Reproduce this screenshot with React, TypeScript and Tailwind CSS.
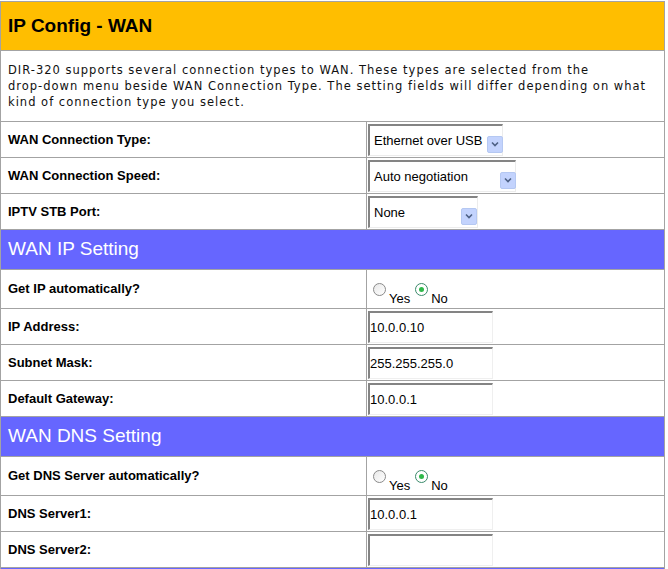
import React from 'react';

const line = 'border border-[#a3a3a3]';

function FakeSelect({ value, width, arrowLeft }: { value: string; width: number; arrowLeft: number }) {
  return (
    <div
      className="relative h-[32px] border-t-2 border-l-2 border-t-[#848484] border-l-[#848484] border-b border-r border-b-[#ececec] border-r-[#ececec] bg-white"
      style={{ width }}
    >
      <span className="absolute left-[4px] top-[8px] text-[13px] leading-[14px] text-black">{value}</span>
      <span
        className="absolute top-[10px] flex h-[17px] w-[16px] items-center justify-center rounded-[2px] border border-[#b5c8f2] bg-[#c3d3fd]"
        style={{ left: arrowLeft }}
      >
        <svg width="8" height="6" viewBox="0 0 8 6">
          <path d="M1 1.5 L4 4.5 L7 1.5" fill="none" stroke="#4d6185" strokeWidth="1.6" />
        </svg>
      </span>
    </div>
  );
}

function FakeInput({ value }: { value: string }) {
  return (
    <div className="h-[32px] w-[125px] border-t-2 border-l-2 border-t-[#848484] border-l-[#848484] border-b border-r border-b-[#efefef] border-r-[#efefef] bg-white pt-[7px] text-[13px] leading-[15px] text-black">
      {value}
    </div>
  );
}

function YesNo() {
  return (
    <div className="flex items-start pl-[5px] pt-[10px] text-[13px] text-black">
      <span className="mt-[1px] h-[13px] w-[13px] rounded-full border border-[#8a8a8a] bg-gradient-to-br from-[#e8e8e8] to-white" />
      <span className="mt-[10px] ml-[3px] mr-[5px] leading-[14px]">Yes</span>
      <span className="mt-[1px] flex h-[13px] w-[13px] items-center justify-center rounded-full border border-[#3a8a6a] bg-white">
        <span className="h-[5px] w-[5px] rounded-full bg-[#2fb84a]" />
      </span>
      <span className="mt-[10px] ml-[3px] leading-[14px]">No</span>
    </div>
  );
}

function Row({ label, h, children }: { label: string; h: number; children?: React.ReactNode }) {
  return (
    <tr style={{ height: h }}>
      <td className={`${line} w-[366px] pl-[7px] align-middle text-[13px] font-bold text-black`}>{label}</td>
      <td className={`${line} pl-[1px] align-middle`}>{children}</td>
    </tr>
  );
}

function Section({ title }: { title: string }) {
  return (
    <tr className="h-[40px]">
      <td colSpan={2} className={`${line} bg-[#6666ff] pl-[7px] align-middle text-[19px] text-white`}>{title}</td>
    </tr>
  );
}

export default function App() {
  return (
    <div className="h-[569px] overflow-hidden bg-white pt-[1px] font-['Liberation_Sans',Arial,sans-serif]">
      <table className="w-[665px] border-collapse">
        <tbody>
          <tr className="h-[49px]">
            <td colSpan={2} className={`${line} bg-[#ffbe00] pl-[7px] align-middle text-[19px] font-bold text-black`}>
              IP Config - WAN
            </td>
          </tr>
          <tr className="h-[71px]">
            <td colSpan={2} className={`${line} pl-[7px] pt-[11px] align-top font-['DejaVu_Sans',Verdana,sans-serif] text-[11.5px] leading-[16px] tracking-[1px] text-[#111]`}>
              DIR-320 supports several connection types to WAN. These types are selected from the<br />
              drop-down menu beside WAN Connection Type. The setting fields will differ depending on what<br />
              kind of connection type you select.
            </td>
          </tr>
          <Row label="WAN Connection Type:" h={36}>
            <FakeSelect value="Ethernet over USB" width={135} arrowLeft={117} />
          </Row>
          <Row label="WAN Connection Speed:" h={36}>
            <FakeSelect value="Auto negotiation" width={148} arrowLeft={130} />
          </Row>
          <Row label="IPTV STB Port:" h={36}>
            <FakeSelect value="None" width={110} arrowLeft={91} />
          </Row>
          <Section title="WAN IP Setting" />
          <Row label="Get IP automatically?" h={39}>
            <YesNo />
          </Row>
          <Row label="IP Address:" h={36}>
            <FakeInput value="10.0.0.10" />
          </Row>
          <Row label="Subnet Mask:" h={36}>
            <FakeInput value="255.255.255.0" />
          </Row>
          <Row label="Default Gateway:" h={36}>
            <FakeInput value="10.0.0.1" />
          </Row>
          <Section title="WAN DNS Setting" />
          <Row label="Get DNS Server automatically?" h={39}>
            <YesNo />
          </Row>
          <Row label="DNS Server1:" h={36}>
            <FakeInput value="10.0.0.1" />
          </Row>
          <Row label="DNS Server2:" h={36}>
            <FakeInput value="" />
          </Row>
          <Section title="" />
        </tbody>
      </table>
    </div>
  );
}
